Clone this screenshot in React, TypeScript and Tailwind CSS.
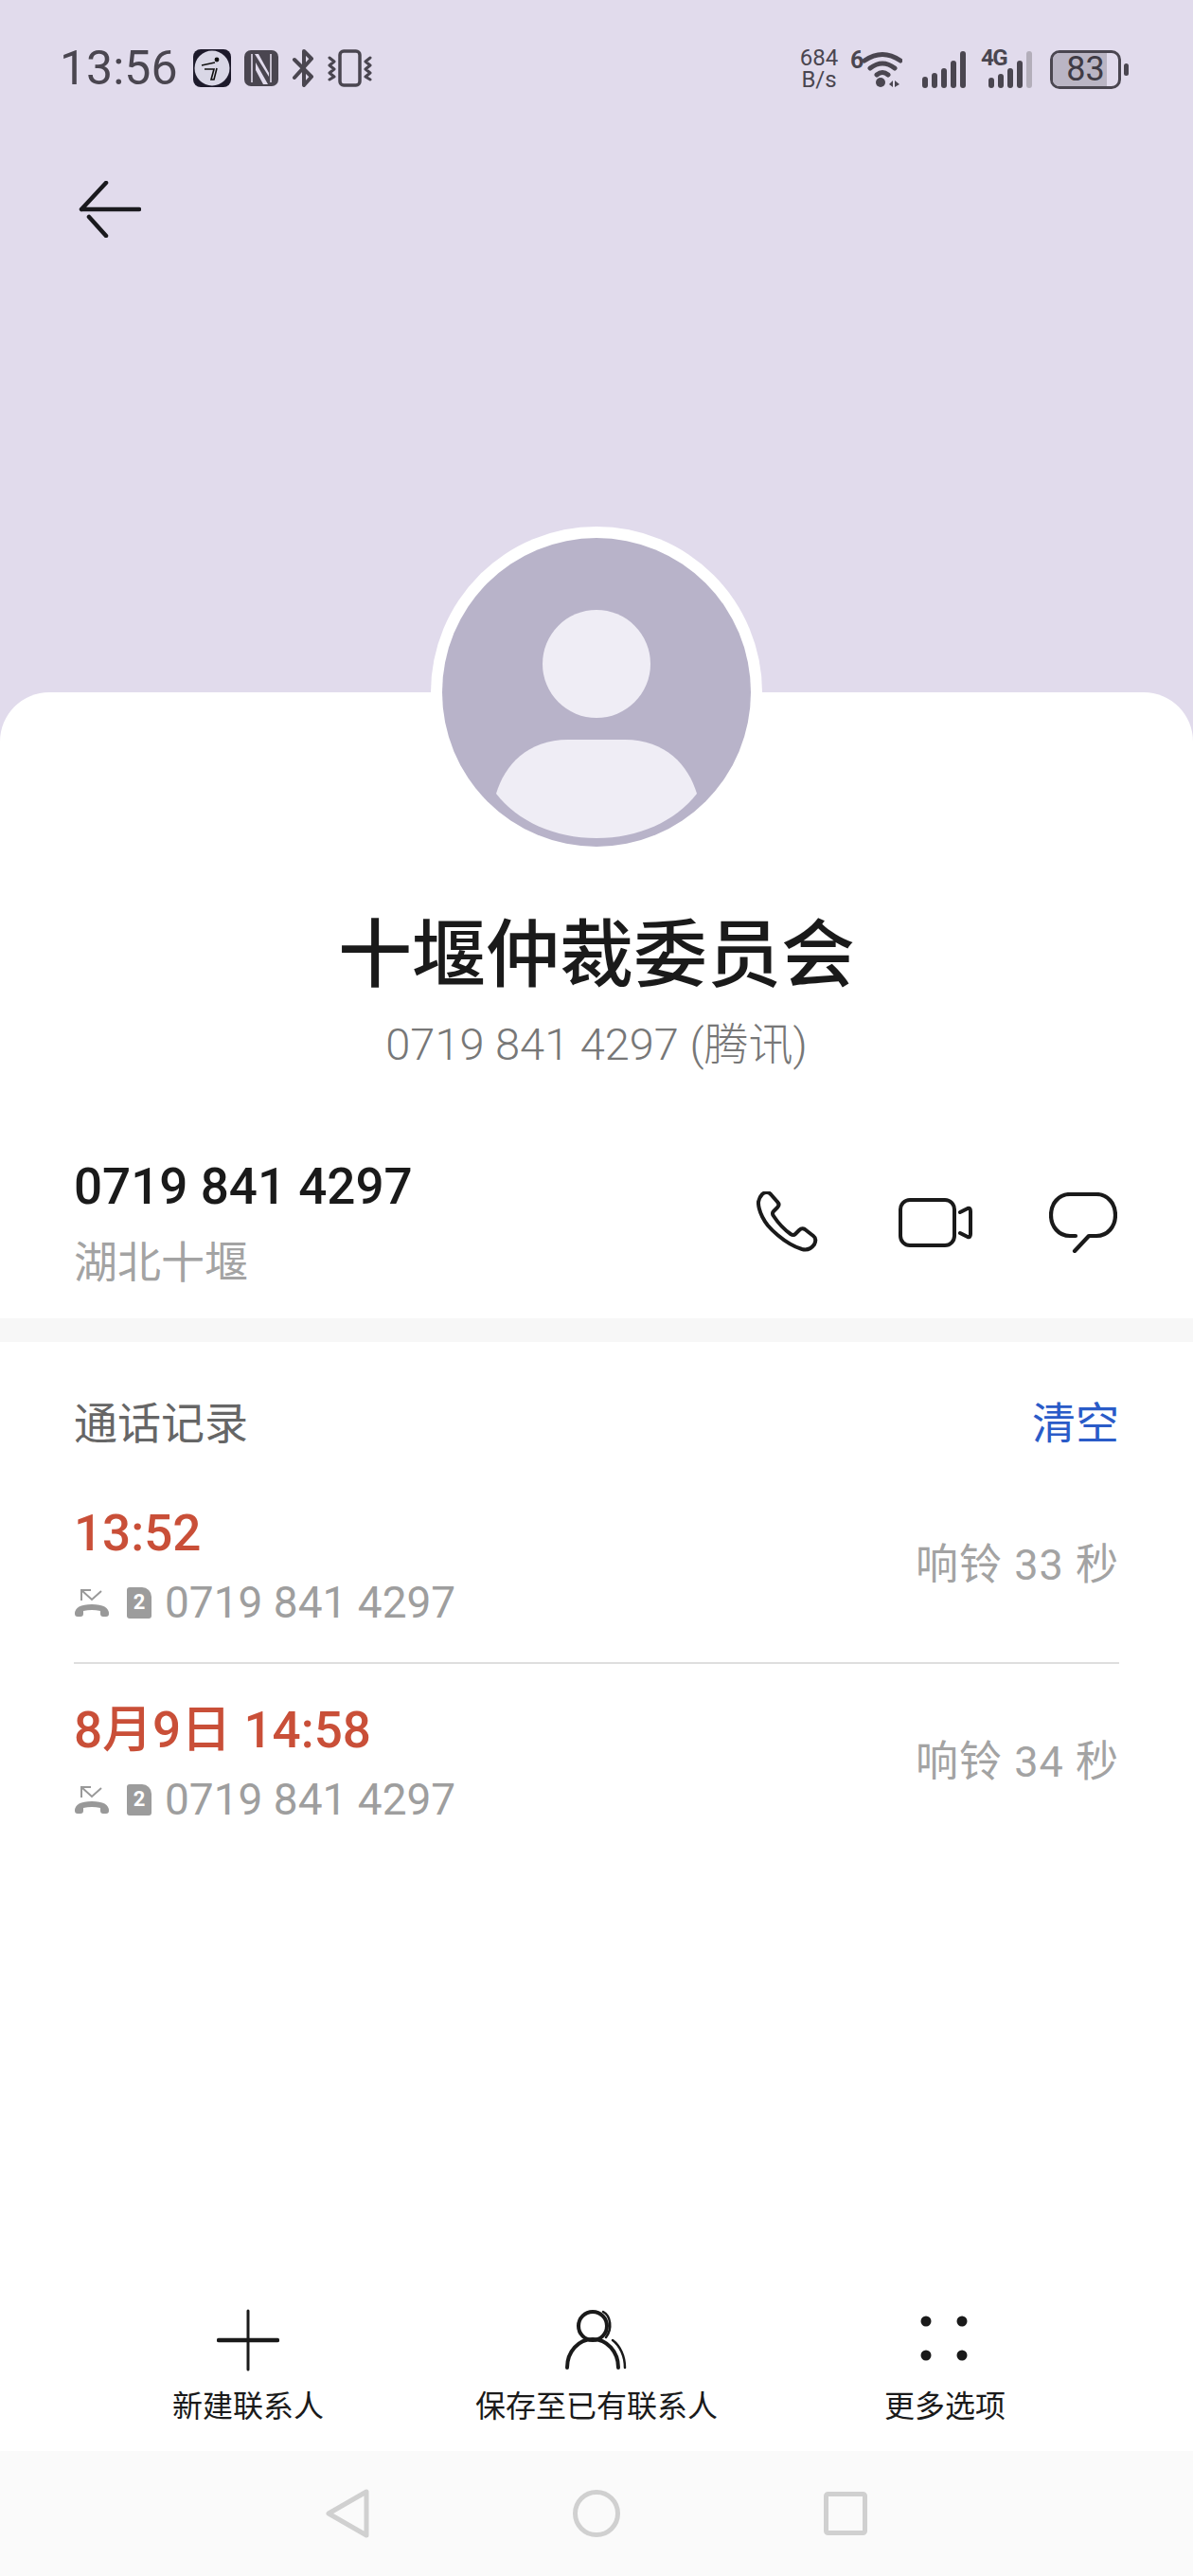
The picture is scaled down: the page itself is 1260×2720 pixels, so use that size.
const latin = "font-['Roboto','Noto_Sans_CJK_SC',sans-serif]";

function AppIcon() {
  return (
    <svg width="40" height="40" viewBox="0 0 40 40">
      <rect width="40" height="40" rx="8" fill="#1d1a2b" />
      <circle cx="20" cy="20" r="18.5" fill="#d9d7e6" />
      <circle cx="25" cy="11" r="2.4" fill="#111" />
      <path d="M9 17l14-3M12 21h10l-3 11h3l3-12" fill="none" stroke="#111" strokeWidth="1.6" />
    </svg>
  );
}

function NfcIcon() {
  return (
    <svg width="36" height="38" viewBox="0 0 36 38">
      <rect width="36" height="38" rx="7" fill="#4a4650" />
      <path d="M8 4v30M28 4v30" stroke="#e1dbec" strokeWidth="1.6" />
      <path d="M11 4h4l11 20v4zM12 13l13 23h-5l-8-15z" fill="#e1dbec" />
    </svg>
  );
}

function BluetoothIcon() {
  return (
    <svg width="24" height="40" viewBox="0 0 24 40" fill="none" stroke="#4a4650" strokeWidth="4" strokeLinecap="round" strokeLinejoin="round">
      <path d="M3 11l18 18-8 9V2l8 8-18 20" />
    </svg>
  );
}

function VibrateIcon() {
  return (
    <svg width="47" height="40" viewBox="0 0 47 40" fill="none" stroke="#4a4650" strokeLinecap="round" strokeLinejoin="round">
      <rect x="13" y="2" width="21" height="36" rx="4" strokeWidth="3.5" />
      <path d="M2 9l5 4-5 4 5 4-5 4 5 4-5 3M45 9l-5 4 5 4-5 4 5 4-5 4 5 3" strokeWidth="3" />
    </svg>
  );
}

function WifiIcon() {
  return (
    <div className="relative h-[40px] w-[55px]">
      <span className={`absolute left-0 top-[-4px] text-[25px] font-bold leading-[30px] text-[#4a4650] ${latin}`}>6</span>
      <svg width="55" height="40" viewBox="0 0 55 40" fill="none" stroke="#4a4650" strokeLinecap="round">
        <path d="M15 11q19-13 38 0M21 19q13-10 26 0M28 26q6-5 12 0" strokeWidth="5" />
        <circle cx="32" cy="34" r="5" fill="#4a4650" stroke="none" />
        <path d="M41 36l4-4v7zM47 32v7l5-3z" fill="#4a4650" stroke="none" />
      </svg>
    </div>
  );
}

function SignalIcon() {
  const bars = [24, 32, 42, 58, 78];
  return (
    <div className="flex h-[40px] items-end gap-[4px]">
      {bars.map((h) => (
        <div key={h} className="w-[6px] rounded-full bg-[#4a4650]" style={{ height: `${(h / 78) * 39}px` }} />
      ))}
    </div>
  );
}

function Signal4GIcon() {
  const bars = [22, 30, 42, 58];
  return (
    <div className="flex h-[40px] w-[57px] items-end gap-[4px] pl-[8px] relative">
      <span className={`absolute left-0 top-[-4px] text-[24px] leading-[24px] font-bold text-[#4a4650] tracking-[-1.5px] ${latin}`}>4G</span>
      {bars.map((h) => (
        <div key={h} className="w-[6px] rounded-full bg-[#4a4650]" style={{ height: `${(h / 78) * 39}px` }} />
      ))}
      <div className="h-[39px] w-[6px] rounded-full bg-[#b3aeba]" />
    </div>
  );
}

function BatteryIcon() {
  return (
    <div className="flex items-center gap-[3px]">
      <div className="relative h-[41px] w-[75px] overflow-hidden rounded-[10px] border-[3px] border-[#4a4650]">
        <div className="h-full w-[83%] bg-[#bab5c4]" />
        <span className={`absolute inset-0 flex items-center justify-center text-[36px] leading-[35px] text-[#3f3b45] ${latin}`}>83</span>
      </div>
      <div className="h-[13px] w-[5px] rounded-full bg-[#4a4650]" />
    </div>
  );
}

function StatusBar() {
  return (
    <div className="flex h-[144px] items-start justify-between pl-[63px] pr-[68px] pt-[50px]">
      <div className="flex items-center">
        <span className={`text-[50px] leading-[44px] text-[#4a4650] ${latin}`}>13:56</span>
        <div className="ml-[16px] flex items-center gap-[14px]">
          <AppIcon />
          <NfcIcon />
          <BluetoothIcon />
          <VibrateIcon />
        </div>
      </div>
      <div className="flex items-center">
        <div className={`flex w-[46px] flex-col items-center text-[24px] leading-[23px] text-[#4a4650] ${latin}`}>
          <span>684</span>
          <span>B/s</span>
        </div>
        <div className="ml-[10px]"><WifiIcon /></div>
        <div className="ml-[21px]"><SignalIcon /></div>
        <div className="ml-[16px]"><Signal4GIcon /></div>
        <div className="ml-[16px]"><BatteryIcon /></div>
      </div>
    </div>
  );
}

function BackArrow() {
  return (
    <svg width="66" height="60" viewBox="0 0 66 60" fill="none" stroke="#1a1a1e" strokeWidth="4.5" strokeLinecap="round" strokeLinejoin="round">
      <path d="M3 30h61M3 30L29 2M11 38l18 20" />
    </svg>
  );
}

function Avatar() {
  return (
    <div className="mx-auto -mt-[175px] h-[350px] w-[350px] rounded-full bg-white p-[12px]">
      <svg viewBox="0 0 326 326" className="h-full w-full">
        <defs>
          <clipPath id="avatar-clip">
            <circle cx="163" cy="163" r="163" />
          </clipPath>
        </defs>
        <circle cx="163" cy="163" r="163" fill="#b8b3c9" />
        <circle cx="163" cy="133" r="57" fill="#efedf5" />
        <path d="M57 270C66 240 90 213 133 213h60c43 0 67 27 76 57-22 29-62 47-106 47s-84-18-106-47z" fill="#efedf5" clipPath="url(#avatar-clip)" />
      </svg>
    </div>
  );
}

function PhoneIcon() {
  return (
    <svg width="66" height="66" viewBox="0 0 66 66" fill="none" stroke="#1a1a1a" strokeWidth="4" strokeLinejoin="round">
      <path d="M6 3Q11-1 15 3l7 8q3 3 0 6l-4 4q-2 2 0 5 8 12 18 19 3 2 5 0l4-4q3-3 6-1l9 7q4 3 1 9-5 7-13 5C28 55 12 36 12 36 1 22 2 11 2 11q1-5 4-8z" />
    </svg>
  );
}

function VideoIcon() {
  return (
    <svg width="78" height="52" viewBox="0 0 78 52" fill="none" stroke="#1a1a1a" strokeWidth="4" strokeLinecap="round" strokeLinejoin="round">
      <rect x="2" y="2" width="57" height="48" rx="10" />
      <path d="M65 15l8-4q3-1 3 3v24q0 4-3 3l-8-4" />
    </svg>
  );
}

function MessageIcon() {
  return (
    <svg width="72" height="64" viewBox="0 0 72 64" fill="none" stroke="#1a1a1a" strokeWidth="4.2" strokeLinecap="round" strokeLinejoin="round">
      <path d="M28 46H22C10 46 2 36 2 24S10 2 22 2h28c12 0 20 10 20 22s-8 22-20 22h-8L27 62" />
    </svg>
  );
}

function MissedIcon() {
  return (
    <svg width="38" height="30" viewBox="0 0 38 30" className="shrink-0">
      <path d="M18 2H8v11M8 2l11 10 10-9" fill="none" stroke="#999" strokeWidth="2" />
      <path d="M1 27q0-10 18-10t18 10q0 3-3 3h-3q-3 0-3-3v-3q-9-2-18 0v3q0 3-3 3H4q-3 0-3-3z" fill="#999" />
    </svg>
  );
}

function Sim2Icon() {
  return (
    <div className={`ml-[18px] flex h-[33px] w-[26px] items-center justify-center rounded-[3px] rounded-tr-[10px] bg-[#9c9c9c] text-[22px] font-bold leading-none text-white ${latin}`}>
      2
    </div>
  );
}

function CallRow({ when, duration }: { when: string; duration: string }) {
  return (
    <div className="flex items-center justify-between">
      <div>
        <p className={`h-[60px] text-[53px] font-medium leading-[60px] text-[#c94f38] ${latin}`}>{when}</p>
        <div className="mt-[18px] flex h-[50px] items-center">
          <MissedIcon />
          <Sim2Icon />
          <span className={`ml-[14px] text-[46px] leading-[50px] text-[#9e9e9e] ${latin}`}>0719 841 4297</span>
        </div>
      </div>
      <span className={`text-[45px] tracking-[1px] text-[#a3a3a3] ${latin}`}>{duration}</span>
    </div>
  );
}

function AddIcon() {
  return (
    <svg width="66" height="66" viewBox="0 0 66 66" stroke="#1a1a1a" strokeLinecap="round">
      <path d="M33 2v62" strokeWidth="3" />
      <path d="M2 33h62" strokeWidth="4.5" />
    </svg>
  );
}

function ExistingContactIcon() {
  return (
    <svg width="66" height="64" viewBox="0 0 66 64" fill="none" stroke="#1a1a1a" strokeLinecap="round">
      <circle cx="29" cy="17" r="15" strokeWidth="4" />
      <path d="M2 61C2 44 14 31 29 31s27 13 27 30" strokeWidth="4" />
      <path d="M40 2c8 4 10 18 3 27M50 32c8 6 13 17 13 29" strokeWidth="2.5" />
    </svg>
  );
}

function MoreIcon() {
  return (
    <svg width="52" height="52" viewBox="0 0 52 52" fill="#1a1a1a">
      <circle cx="6" cy="6" r="5.5" />
      <circle cx="44" cy="6" r="5.5" />
      <circle cx="6" cy="42" r="5.5" />
      <circle cx="44" cy="42" r="5.5" />
    </svg>
  );
}

function BottomAction({ icon, label }: { icon: React.ReactNode; label: string }) {
  return (
    <div className="flex w-[368px] flex-col items-center">
      <div className="flex h-[66px] items-center justify-center">{icon}</div>
      <span className={`mt-[15px] text-[32px] leading-[44px] text-[#1a1a1a] ${latin}`}>{label}</span>
    </div>
  );
}

export default function App() {
  return (
    <div className={`flex h-[2720px] w-[1260px] flex-col overflow-hidden bg-[#e1dbec] ${latin}`}>
      <div className="h-[731px] shrink-0">
        <StatusBar />
        <div className="ml-[83px] mt-[47px]"><BackArrow /></div>
      </div>

      <main className="flex flex-1 flex-col rounded-t-[52px] bg-white">
        <Avatar />

        <div className="mt-[59px] text-center">
          <h1 className="text-[78px] font-medium leading-[90px] text-[#1a1a1a]">十堰仲裁委员会</h1>
          <p className="mt-[18px] text-[47px] font-light leading-[60px] text-[#777777]">0719 841 4297 (腾讯)</p>
        </div>

        <div className="mt-[90px] flex h-[140px] items-center justify-between pl-[78px] pr-[80px]">
          <div>
            <p className="text-[53px] font-medium leading-[60px] text-[#1a1a1a]">0719 841 4297</p>
            <p className="mt-[20px] text-[46px] leading-[60px] text-[#a3a3a3]">湖北十堰</p>
          </div>
          <div className="-mt-[4px] flex items-center gap-[84px]">
            <PhoneIcon />
            <VideoIcon />
            <div className="-ml-[3px]"><MessageIcon /></div>
          </div>
        </div>

        <div className="mt-[29px] h-[25px] bg-[#f7f7f7]" />

        <section className="px-[78px]">
          <div className="mt-[58px] flex h-[56px] items-center justify-between">
            <h2 className="text-[46px] leading-[56px] text-[#666666]">通话记录</h2>
            <button className="text-[46px] leading-[56px] text-[#2a5bc8]">清空</button>
          </div>
          <div className="mt-[58px]"><CallRow when="13:52" duration="响铃 33 秒" /></div>
          <div className="mt-[38px] h-[2px] bg-[#dedede]" />
          <div className="mt-[40px]"><CallRow when="8月9日 14:58" duration="响铃 34 秒" /></div>
        </section>

        <div className="mt-auto flex justify-center pb-[25px]">
          <BottomAction icon={<AddIcon />} label="新建联系人" />
          <BottomAction icon={<ExistingContactIcon />} label="保存至已有联系人" />
          <BottomAction icon={<MoreIcon />} label="更多选项" />
        </div>

        <nav className="flex h-[132px] items-center justify-center gap-[215px] bg-[#fafafa]">
          <svg width="46" height="52" viewBox="0 0 46 52" fill="none" stroke="#d0d0d0" strokeWidth="5" strokeLinejoin="round">
            <path d="M43 3v46L3 26z" />
          </svg>
          <svg width="50" height="50" viewBox="0 0 50 50" fill="none" stroke="#d0d0d0" strokeWidth="5">
            <circle cx="25" cy="25" r="22.5" />
          </svg>
          <svg width="46" height="46" viewBox="0 0 46 46" fill="none" stroke="#d0d0d0" strokeWidth="5" strokeLinejoin="round">
            <rect x="2.5" y="2.5" width="41" height="41" rx="2" />
          </svg>
        </nav>
      </main>
    </div>
  );
}
